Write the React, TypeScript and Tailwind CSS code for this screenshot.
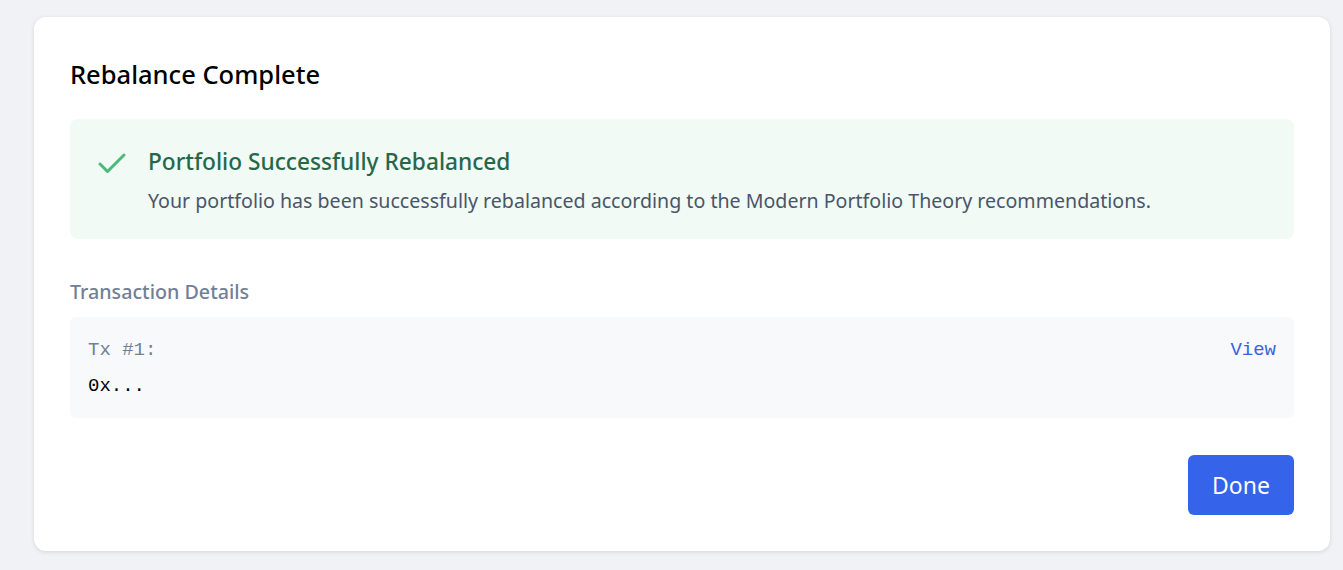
import { Check } from 'lucide-react'

const App = () => {
  return (
    <div className="min-h-screen bg-[#f0f2f5] pt-[17px] pr-[13px] pl-[34px] font-['Noto_Sans','Open_Sans',sans-serif]">
      <div className="rounded-xl bg-white p-9 shadow-[0_1px_4px_rgba(0,0,0,0.12)]">
        <h2 className="text-[25.5px] leading-[42px] font-medium text-black">Rebalance Complete</h2>

        <div className="mt-6 flex gap-[18px] rounded-lg bg-[#f1faf4] px-6 pt-[27px] pb-[23px]">
          <Check size={36} strokeWidth={2} className="shrink-0 text-[#48bb78]" />
          <div>
            <p className="text-[22.7px] leading-8 font-medium text-[#276749]">Portfolio Successfully Rebalanced</p>
            <p className="mt-2 text-[19.6px] leading-[30px] text-[#4a5568]">
              Your portfolio has been successfully rebalanced according to the Modern Portfolio Theory recommendations.
            </p>
          </div>
        </div>

        <h3 className="mt-[38px] text-[19.7px] leading-[30px] font-medium text-[#718096]">Transaction Details</h3>

        <div className="mt-[10px] rounded-md bg-[#f7f9fb] px-[18px] pt-[19px] pb-[18px] font-['Liberation_Mono',monospace]">
          <div className="flex items-center justify-between">
            <span className="text-[19px] leading-7 text-[#718096]">Tx #1:</span>
            <a href="#" className="text-[19px] leading-7 text-[#3b63e0]">View</a>
          </div>
          <p className="mt-2 text-[19px] leading-7 text-black">0x...</p>
        </div>

        <div className="mt-[37px] flex justify-end">
          <button className="h-[60px] w-[106px] rounded-md bg-[#3563e9] text-[23px] text-white">Done</button>
        </div>
      </div>
    </div>
  )
}

export default App
